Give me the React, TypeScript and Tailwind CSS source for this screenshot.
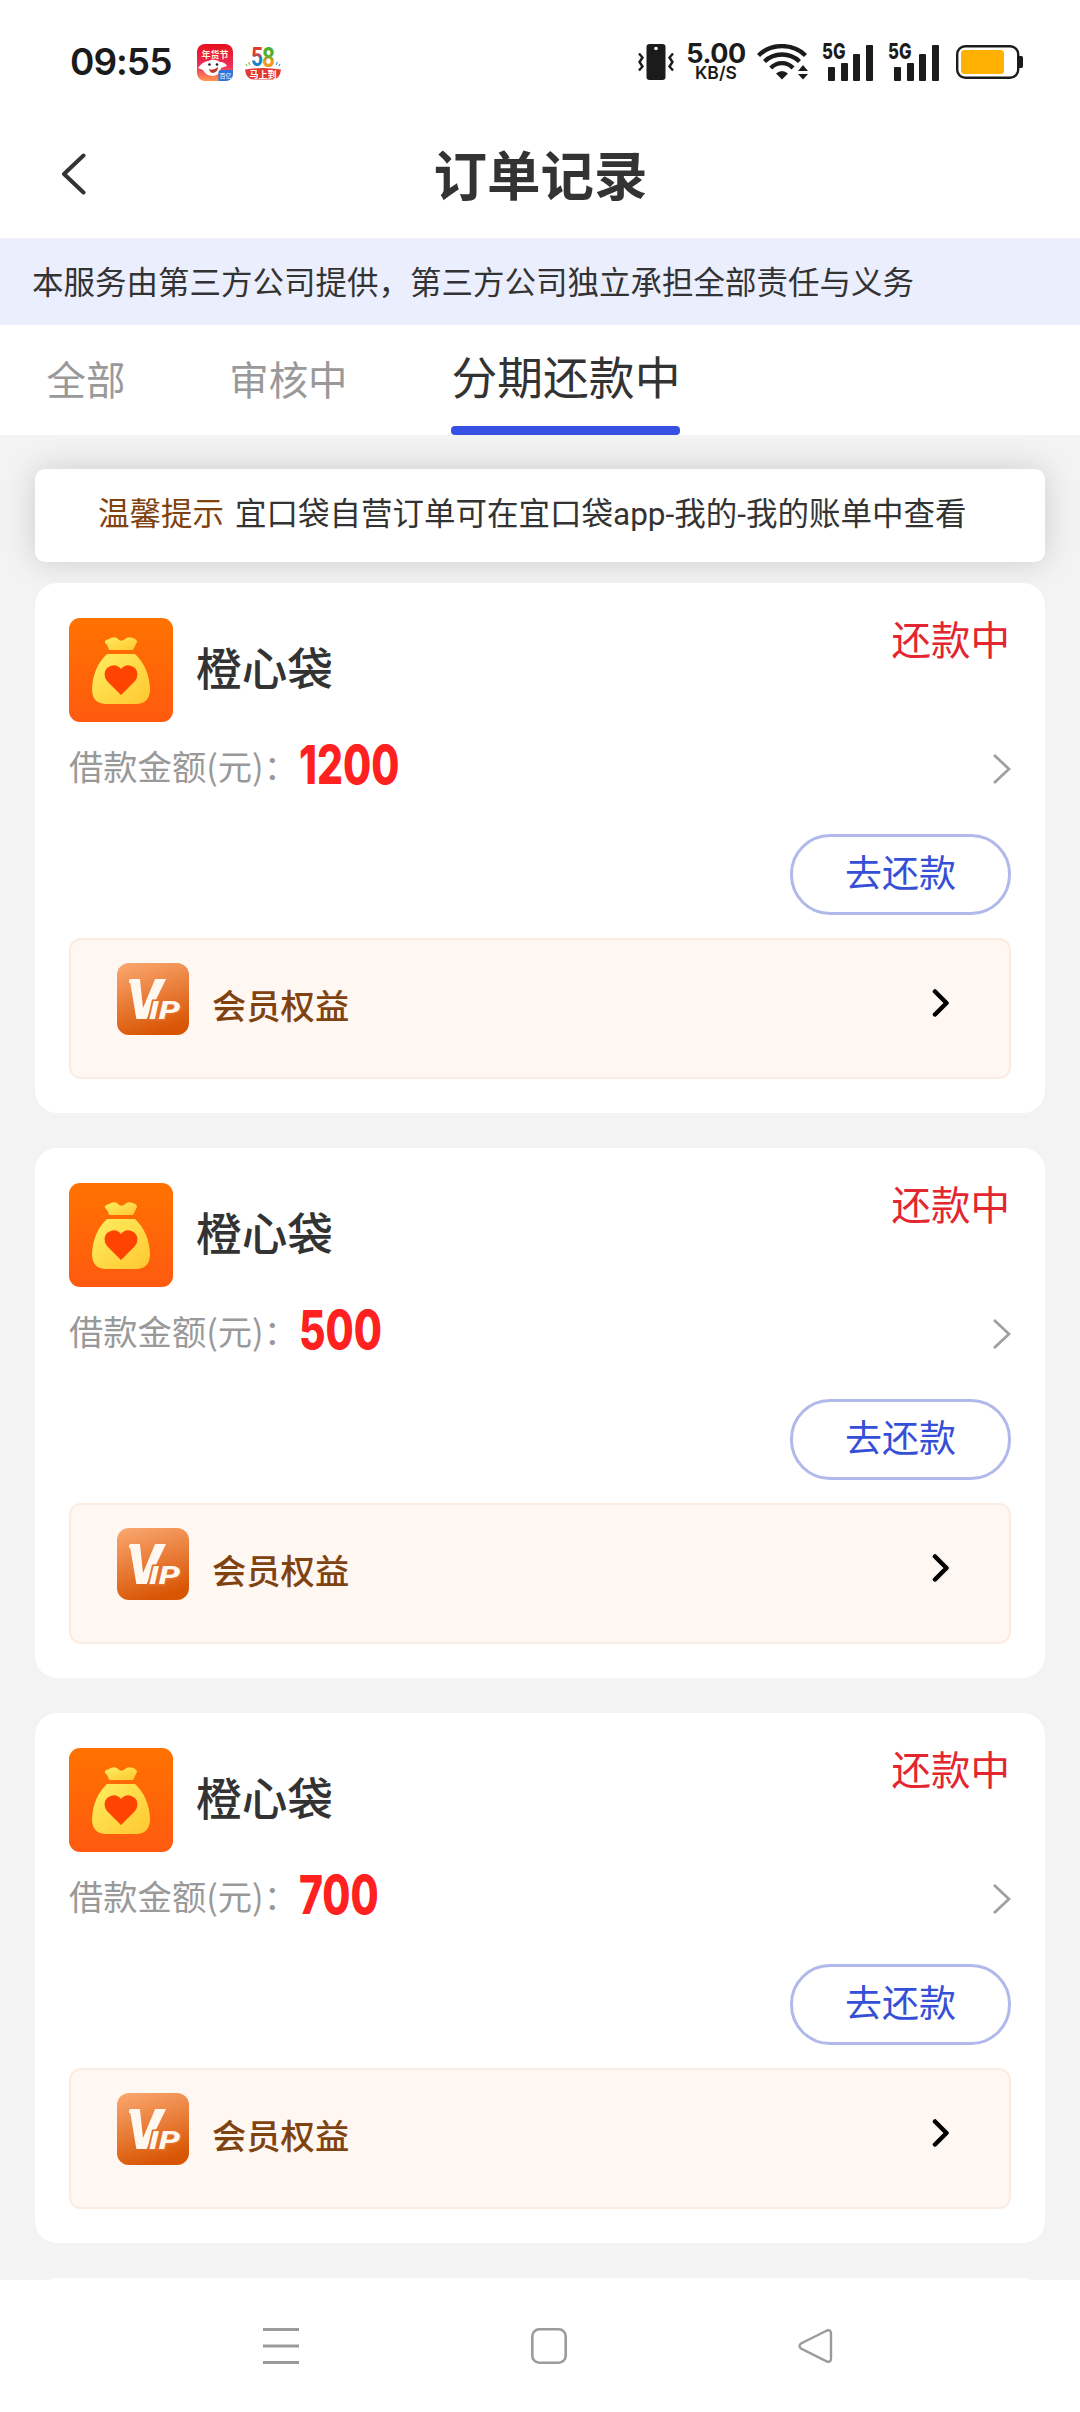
import { useState } from 'react';

const FONT = "font-['Noto_Sans_CJK_SC','Noto_Sans',sans-serif]";

const TABS = [
  { key: 'all', label: '全部' },
  { key: 'review', label: '审核中' },
  { key: 'repaying', label: '分期还款中' },
];

const ORDERS = [
  { id: 1, name: '橙心袋', amount: 1200, status: '还款中' },
  { id: 2, name: '橙心袋', amount: 500, status: '还款中' },
  { id: 3, name: '橙心袋', amount: 700, status: '还款中' },
];

function VibrateIcon() {
  return (
    <svg width="36" height="36" viewBox="0 0 36 36" fill="none">
      <rect x="8.5" y="0" width="19" height="36" rx="3" fill="#1b1b1b" />
      <circle cx="18" cy="4.5" r="1.8" fill="#fff" />
      <path d="M1 9.5l3.500 4-3 4.500 3 4.500-3.500 4M35 9.500l-3.500 4 3 4.500-3 4.500 3.500 4" stroke="#1b1b1b" strokeWidth="2.4" />
    </svg>
  );
}

function WifiIcon() {
  return (
    <svg width="52" height="36" viewBox="0 0 52 36" fill="none">
      <g stroke="#1b1b1b" strokeWidth="4.4">
        <path d="M1.500 11.500C14-1 36-1 48.500 11.500" />
        <path d="M7.500 17.500C17.500 8.200 32.500 8.200 42.500 17.500" />
        <path d="M13.800 24C20 17.500 30 17.500 36 24" />
      </g>
      <path d="M19 29.500Q25 24.500 31 29.500L25 35.500Z" fill="#1b1b1b" />
      <path d="M41 27l5-6 5 6zM41 30l5 5.500 5-5.500z" fill="#1b1b1b" />
    </svg>
  );
}

function Signal() {
  return (
    <div className="relative h-[38px] w-[52px]">
      <span className="absolute left-0 top-0 origin-left scale-x-[0.76] font-['Inter',sans-serif] text-[22px] leading-[17px] font-extrabold">5G</span>
      <div className="flex h-full items-end gap-[5.5px] pl-[6px]">
        <i className="h-[14px] w-[7px] rounded-[1px] bg-[#1b1b1b]" />
        <i className="h-[18px] w-[7px] rounded-[1px] bg-[#1b1b1b]" />
        <i className="h-[27px] w-[7px] rounded-[1px] bg-[#1b1b1b]" />
        <i className="h-[36px] w-[7px] rounded-[1px] bg-[#1b1b1b]" />
      </div>
    </div>
  );
}

function BatteryIcon() {
  return (
    <svg width="68" height="34" viewBox="0 0 68 34" fill="none">
      <rect x="1.2" y="1.2" width="61" height="31.6" rx="8" stroke="#1b1b1b" strokeWidth="2.4" />
      <rect x="5" y="5" width="43" height="24" rx="3.5" fill="#ffb000" />
      <path d="M63 11h2.500q1.500 0 1.500 2v8q0 2-1.500 2H63z" fill="#1b1b1b" />
    </svg>
  );
}

function FestivalAppIcon() {
  return (
    <svg width="36" height="37" viewBox="0 0 36 37">
      <defs>
        <linearGradient id="fest" x1="0" y1="0" x2="0" y2="1">
          <stop offset="0" stopColor="#e60f1c" />
          <stop offset="0.6" stopColor="#f0305c" />
          <stop offset="1" stopColor="#ff9a50" />
        </linearGradient>
      </defs>
      <rect width="36" height="37" rx="8" fill="url(#fest)" />
      <text x="18" y="13.500" textAnchor="middle" fontSize="9" fontWeight="700" fill="#fff4d8" fontFamily="Noto Sans CJK SC">年货节</text>
      <path d="M1 24q4-6 10-7 7-3 12 1 5 0 7 4l-6 2q-1 8-9 8-7-1-9-6z" fill="#fff" />
      <circle cx="12.500" cy="20.500" r="1.300" fill="#222" />
      <circle cx="20" cy="20.500" r="1.300" fill="#222" />
      <path d="M12 25q4 2 9-2 0 5-5 6-3 0-4-4z" fill="#b33a2c" />
      <path d="M21.500 28q0-2 2-2H36v3q0 8-8 8h-6.500z" fill="#2f74dc" />
      <text x="28.500" y="34" textAnchor="middle" fontSize="6" fill="#fff" fontFamily="Noto Sans CJK SC">百亿</text>
    </svg>
  );
}

function FiveEightIcon() {
  return (
    <svg width="36" height="44" viewBox="0 -8 36 44">
      <defs>
        <linearGradient id="five" x1="0" y1="0" x2="0" y2="1">
          <stop offset="0.4" stopColor="#e2382e" />
          <stop offset="0.55" stopColor="#1b82c9" />
        </linearGradient>
        <linearGradient id="eight" x1="0" y1="0" x2="0" y2="1">
          <stop offset="0.45" stopColor="#4fae2e" />
          <stop offset="0.6" stopColor="#f39a1e" />
        </linearGradient>
      </defs>
      <text x="6" y="20" fontSize="26" fontWeight="700" fontFamily="Roboto" fill="url(#five)" textLength="12" lengthAdjust="spacingAndGlyphs">5</text>
      <text x="17" y="21" fontSize="28" fontWeight="700" fontFamily="Roboto" fill="url(#eight)" textLength="13" lengthAdjust="spacingAndGlyphs">8</text>
      <path d="M2 20l-1-2M5 19l-1.500-3" stroke="#8bc34a" strokeWidth="1.200" />
      <path d="M34 20l1-2M31 19l1.500-3" stroke="#3aa0dd" strokeWidth="1.200" />
      <path d="M0 23.500q18-3 36 0-1 10-9 10H9Q1 33.500 0 23.500z" fill="#e23a30" />
      <text x="18" y="31.500" textAnchor="middle" fontSize="9" fontWeight="700" fill="#fff" fontFamily="Noto Sans CJK SC">马上到</text>
    </svg>
  );
}

function PurseLogo() {
  return (
    <svg className="shrink-0" width="104" height="104" viewBox="0 0 104 104">
      <defs>
        <linearGradient id="logoBg" x1="0" y1="0" x2="0" y2="1">
          <stop offset="0" stopColor="#ff7200" />
          <stop offset="1" stopColor="#ff5a10" />
        </linearGradient>
        <linearGradient id="logoBag" x1="0" y1="0" x2="1" y2="1">
          <stop offset="0" stopColor="#ffee60" />
          <stop offset="1" stopColor="#ffc72f" />
        </linearGradient>
      </defs>
      <rect width="104" height="104" rx="11" fill="url(#logoBg)" />
      <path d="M40 32q-1-5-4-7-1-3 4-4 4-3 8-1 4 5 8 1 3-3 8-1 4 1 4 4-2 4-4 8z" fill="url(#logoBag)" />
      <path d="M38 36h28q14 13 15 35 0 14-13 15H36Q23 85 23 71q1-22 15-35z" fill="url(#logoBag)" />
      <path d="M52 77L38 63q-5-7 0-13 8-6 14 1 6-7 14-1 5 6 0 13z" fill="#ff4300" />
    </svg>
  );
}

function VipIcon() {
  return (
    <svg className="shrink-0" width="72" height="72" viewBox="0 0 72 72">
      <defs>
        <linearGradient id="vipBg" x1="0.2" y1="0" x2="0.5" y2="1">
          <stop offset="0" stopColor="#f9a46c" />
          <stop offset="1" stopColor="#d85503" />
        </linearGradient>
      </defs>
      <rect width="72" height="72" rx="12" fill="url(#vipBg)" />
      <rect x="12" y="17" width="8" height="3" fill="#fff8f0" />
      <g fill="#fff8f0" fontFamily="Roboto" fontStyle="italic">
        <text x="9" y="56" fontSize="55" fontWeight="900" textLength="36" lengthAdjust="spacingAndGlyphs">V</text>
        <text x="32" y="56" fontSize="26" fontWeight="800" textLength="31" lengthAdjust="spacingAndGlyphs" stroke="#e4702c" strokeWidth="3" paintOrder="stroke">IP</text>
      </g>
    </svg>
  );
}

function OrderCard({ order }: { order: (typeof ORDERS)[number] }) {
  return (
    <div className="h-[530px] rounded-[22px] bg-white px-[34px] pt-[35px]">
      <div className="flex h-[104px]">
        <PurseLogo />
        <div className="flex flex-1 items-center pb-[8px] pl-[23px] text-[45.7px] font-medium text-[#333]">{order.name}</div>
        <div className="pr-[1px] text-[39.5px] leading-[40px] text-[#e3262f]">{order.status}</div>
      </div>

      <div className="flex h-[88px] items-center justify-between">
        <div className="flex items-center">
          <span className="w-[229.5px] text-[34.3px] whitespace-nowrap text-[#999]">借款金额(元)：</span>
          <span className="-mt-[2px] origin-left scale-x-[0.755] font-['Inter',sans-serif] text-[54px] leading-[54px] font-extrabold text-[#ff2020]">{order.amount}</span>
        </div>
        <svg width="18" height="30" viewBox="0 0 18 30" fill="none" className="mt-[6px]">
          <path d="M1 1l15 14L1 29" stroke="#a0a0a0" strokeWidth="2.8" />
        </svg>
      </div>

      <div className="mt-[24px] flex justify-end">
        <button className="h-[81px] w-[221px] rounded-[40px] border-[3px] border-[#b0b9ea] pb-[6px] text-[37px] leading-[69px] text-[#354fd6]">去还款</button>
      </div>

      <div className="mt-[23px] flex h-[141px] items-start rounded-[12px] border-2 border-[#fbece2] bg-[#fff7f1] pt-[23px] pr-[59px] pl-[46px]">
        <VipIcon />
        <span className="mt-[16px] flex-1 pl-[23px] text-[34.3px] leading-[50px] font-medium text-[#7f4211]">会员权益</span>
        <svg width="18" height="28" viewBox="0 0 18 28" fill="none" className="mt-[26px]">
          <path d="M3 2.500L14.500 14 3 25.500" stroke="#000" strokeWidth="4.5" strokeLinecap="round" strokeLinejoin="round" />
        </svg>
      </div>
    </div>
  );
}

export default function App() {
  const [tab, setTab] = useState('repaying');

  return (
    <div className={`flex h-[2412px] w-[1080px] flex-col overflow-hidden bg-white text-[#333] ${FONT}`}>
      {/* Status bar */}
      <div className="flex h-[124px] items-center justify-between pr-[56px] pl-[70px] text-[#1b1b1b]">
        <div className="flex items-center">
          <span className="w-[127px] font-['Inter',sans-serif] text-[37px] font-semibold tracking-[-1px]">09:55</span>
          <FestivalAppIcon />
          <span className="-mt-[4px] ml-[12px]"><FiveEightIcon /></span>
        </div>
        <div className="flex items-center">
          <VibrateIcon />
          <div className="ml-[12px] flex w-[60px] flex-col items-center font-['Inter',sans-serif] font-bold">
            <span className="text-[27px] leading-[20px] tracking-[-0.5px]">5.00</span>
            <span className="text-[17.5px] leading-[17px] font-semibold">KB/S</span>
          </div>
          <span className="ml-[11px]"><WifiIcon /></span>
          <span className="ml-[13px]"><Signal /></span>
          <span className="ml-[14px]"><Signal /></span>
          <span className="ml-[16px]"><BatteryIcon /></span>
        </div>
      </div>

      {/* Header */}
      <div className="flex h-[115px] items-center border-b border-[#f4f4f4] px-[61px] pb-[14px]">
        <svg width="26" height="42" viewBox="0 0 26 42" fill="none">
          <path d="M22.500 2.500L3 21l19.500 18.500" stroke="#333" strokeWidth="4" strokeLinecap="round" strokeLinejoin="round" />
        </svg>
        <h1 className="flex-1 pr-[25px] pb-[2px] text-center text-[53.5px] font-bold">订单记录</h1>
      </div>

      <div className="flex h-[86px] items-center bg-[#ebeefd] pb-[2px] pl-[32px] text-[31.5px]">
        本服务由第三方公司提供，第三方公司独立承担全部责任与义务
      </div>

      {/* Tabs */}
      <div className="flex h-[110px] gap-[104px] pl-[46.5px]">
        {TABS.map((t) => (
          <button
            key={t.key}
            onClick={() => setTab(t.key)}
            className={`flex flex-col justify-between whitespace-nowrap ${tab === t.key ? 'text-[45.8px] text-[#333]' : 'text-[39.4px] text-[#999]'}`}
          >
            <span className={tab === t.key ? 'leading-[101px]' : 'leading-[106px]'}>{t.label}</span>
            {tab === t.key && <span className="h-[9px] w-full shrink-0 rounded-[4px] bg-[#3550e2]" />}
          </button>
        ))}
      </div>

      <div className="flex-1 overflow-hidden bg-[#f3f3f3] px-[35px] pt-[34px]">
        <div className="flex h-[93px] items-center rounded-[10px] bg-white pb-[2px] pl-[63px] font-['Roboto','Noto_Sans_CJK_SC',sans-serif] text-[31.5px] shadow-[0_0_32px_rgba(0,0,0,0.16)]">
          <span className="mr-[11px] text-[#7f4211]">温馨提示</span>
          <span>宜口袋自营订单可在宜口袋app-我的-我的账单中查看</span>
        </div>
        <div className="relative mt-[21px] flex flex-col gap-[35px]">
          {ORDERS.map((o) => (
            <OrderCard key={o.id} order={o} />
          ))}
          <div className="h-[530px] rounded-[22px] bg-white" />
        </div>
      </div>

      {/* System navigation */}
      <div className="flex h-[132px] items-center justify-between bg-white pr-[247px] pl-[263px]">
        <svg width="36" height="36" viewBox="0 0 36 36">
          <path d="M0 1.500h36M0 18h36M0 34.500h36" stroke="#9b9b9b" strokeWidth="3" />
        </svg>
        <svg width="36" height="36" viewBox="0 0 36 36" fill="none">
          <rect x="1.3" y="1.3" width="33.4" height="33.4" rx="7" stroke="#9b9b9b" strokeWidth="2.6" />
        </svg>
        <svg width="35" height="36" viewBox="0 0 35 36" fill="none">
          <path d="M29 2.500L3 15.500q-3 2.500 0 5L29 33.500q4 1 4-3v-25q0-4-4-3z" stroke="#9b9b9b" strokeWidth="2.4" />
        </svg>
      </div>
    </div>
  );
}
